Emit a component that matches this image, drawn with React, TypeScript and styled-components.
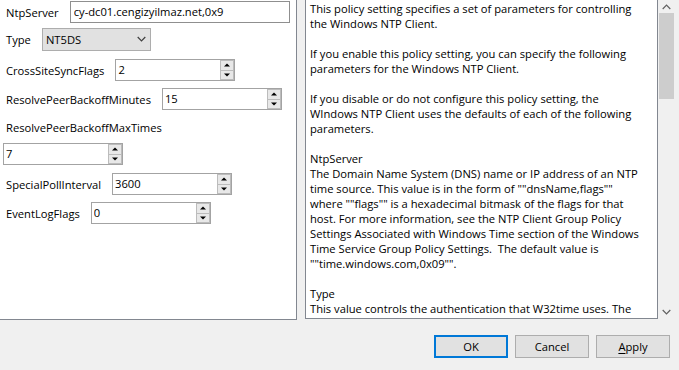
import React from "react";
import styled, { createGlobalStyle } from "styled-components";

const GlobalStyle = createGlobalStyle`
  html, body { margin: 0; padding: 0; }
  body {
    background: #f0f0f0;
    font-family: "Open Sans", "Noto Sans", sans-serif;
    font-size: 11.2px;
    color: #000;
  }
  #root { width: 679px; height: 370px; overflow: hidden; }
`;

const Dialog = styled.div`
  display: flex;
  flex-direction: column;
  width: 679px;
  height: 370px;
`;

const Panels = styled.div`
  display: flex;
  height: 320px;
`;

const OptionsPanel = styled.div`
  box-sizing: border-box;
  width: 297px;
  height: 320px;
  background: #fff;
  border-right: 1px solid #828790;
  border-bottom: 1px solid #828790;
  padding-left: 3px;
  display: flex;
  flex-direction: column;
`;

const Row = styled.div<{ $mt: number }>`
  display: flex;
  align-items: center;
  margin-top: ${(p) => p.$mt}px;
  white-space: nowrap;
`;

const Label = styled.span`
  margin-left: 3px;
  margin-right: 11px;
  line-height: 15px;
`;

const TextInput = styled.input<{ $w: number }>`
  box-sizing: border-box;
  width: ${(p) => p.$w}px;
  height: 22px;
  border: 1px solid #8f8f8f;
  padding: 0 0 1px 3px;
  margin: 0;
  font: inherit;
  color: #000;
  background: #fff;
  outline: none;
`;

const Combo = styled.div`
  box-sizing: border-box;
  width: 109px;
  height: 23px;
  border: 1px solid #adadad;
  background: #e1e1e1;
  display: flex;
  align-items: center;
  justify-content: space-between;
  padding: 0 4px 1px 3px;
`;

const SpinBox = styled.div<{ $w: number }>`
  box-sizing: border-box;
  width: ${(p) => p.$w}px;
  height: 22px;
  border: 1px solid #a3a3a3;
  background: #fff;
  display: flex;
`;

const SpinField = styled.input`
  flex: 1;
  min-width: 0;
  border: none;
  margin: 0;
  padding: 0 0 1px 2px;
  font: inherit;
  color: #000;
  background: transparent;
  outline: none;
`;

const SpinButtons = styled.div`
  display: flex;
  flex-direction: column;
  width: 14px;
  margin: 0 0 0 0;
`;

const SpinButton = styled.div`
  box-sizing: border-box;
  flex: 1;
  border: 1px solid #bcbcbc;
  background: #e8e8e8;
  display: flex;
  align-items: center;
  justify-content: center;
  & + & { border-top: none; }
`;

const HelpBox = styled.div`
  box-sizing: border-box;
  width: 353px;
  height: 319px;
  margin-left: 8px;
  background: #fff;
  border-left: 1px solid #828790;
  border-right: 1px solid #828790;
  border-bottom: 1px solid #828790;
  padding: 1px 0 0 4px;
  line-height: 15px;
  white-space: pre;
  overflow: hidden;
`;

const ScrollBar = styled.div`
  width: 17px;
  height: 320px;
  display: flex;
  flex-direction: column;
  align-items: center;
`;

const ScrollArrow = styled.div<{ $h: number }>`
  height: ${(p) => p.$h}px;
  width: 17px;
  display: flex;
  align-items: center;
  justify-content: center;
`;

const ScrollTrack = styled.div`
  flex: 1;
  width: 15px;
  display: flex;
  flex-direction: column;
`;

const Thumb = styled.div`
  height: 86px;
  background: #cdcdcd;
`;

const ButtonBar = styled.div`
  display: flex;
  justify-content: flex-end;
  gap: 7px;
  margin-top: 15px;
  padding-right: 9px;
`;

const Button = styled.div<{ $default?: boolean }>`
  box-sizing: border-box;
  width: 74px;
  height: 23px;
  background: #e1e1e1;
  border: ${(p) => (p.$default ? "2px solid #0078d7" : "1px solid #adadad")};
  display: flex;
  align-items: center;
  justify-content: center;
  padding-bottom: 1px;
  u { text-decoration-thickness: 1px; text-underline-offset: 2px; }
`;

const Tri = ({ up }: { up?: boolean }) => (
  <svg width="6" height="4" viewBox="0 0 6 4">
    <path d={up ? "M0 3.5 L3 0.5 L6 3.5 Z" : "M0 0.5 L3 3.5 L6 0.5 Z"} fill="#000" />
  </svg>
);

const Chevron = ({ up, color = "#404040" }: { up?: boolean; color?: string }) => (
  <svg width="9" height="6" viewBox="0 0 9 6">
    <path
      d={up ? "M0.7 5 L4.5 1.2 L8.3 5" : "M0.7 1 L4.5 4.8 L8.3 1"}
      fill="none"
      stroke={color}
      strokeWidth="1.2"
    />
  </svg>
);

const Spin = ({ w, value }: { w: number; value: string }) => (
  <SpinBox $w={w}>
    <SpinField readOnly value={value} />
    <SpinButtons>
      <SpinButton>
        <Tri up />
      </SpinButton>
      <SpinButton>
        <Tri />
      </SpinButton>
    </SpinButtons>
  </SpinBox>
);

const helpText = [
  "This policy setting specifies a set of parameters for controlling",
  "the Windows NTP Client.",
  "",
  "If you enable this policy setting, you can specify the following",
  "parameters for the Windows NTP Client.",
  "",
  "If you disable or do not configure this policy setting, the",
  "WIndows NTP Client uses the defaults of each of the following",
  "parameters.",
  "",
  "NtpServer",
  "The Domain Name System (DNS) name or IP address of an NTP",
  'time source. This value is in the form of ""dnsName,flags""',
  'where ""flags"" is a hexadecimal bitmask of the flags for that',
  "host. For more information, see the NTP Client Group Policy",
  "Settings Associated with Windows Time section of the Windows",
  "Time Service Group Policy Settings.  The default value is",
  '""time.windows.com,0x09"".',
  "",
  "Type",
  "This value controls the authentication that W32time uses. The",
  "default value is NT5DS.",
].join("\n");

export default function App() {
  return (
    <>
      <GlobalStyle />
      <Dialog>
        <Panels>
          <OptionsPanel>
            <Row $mt={1}>
              <Label>NtpServer</Label>
              <TextInput $w={220} readOnly value="cy-dc01.cengizyilmaz.net,0x9" />
            </Row>
            <Row $mt={5}>
              <Label>Type</Label>
              <Combo>
                <span>NT5DS</span>
                <Chevron />
              </Combo>
            </Row>
            <Row $mt={8}>
              <Label>CrossSiteSyncFlags</Label>
              <Spin w={120} value="2" />
            </Row>
            <Row $mt={7}>
              <Label>ResolvePeerBackoffMinutes</Label>
              <Spin w={120} value="15" />
            </Row>
            <Row $mt={10}>
              <Label>ResolvePeerBackoffMaxTimes</Label>
            </Row>
            <Row $mt={8}>
              <Spin w={120} value="7" />
            </Row>
            <Row $mt={8}>
              <Label>SpecialPollInterval</Label>
              <Spin w={120} value="3600" />
            </Row>
            <Row $mt={7}>
              <Label>EventLogFlags</Label>
              <Spin w={120} value="0" />
            </Row>
          </OptionsPanel>
          <HelpBox>{helpText}</HelpBox>
          <ScrollBar>
            <ScrollArrow $h={13}>
              <Chevron up color="#606060" />
            </ScrollArrow>
            <ScrollTrack>
              <Thumb />
            </ScrollTrack>
            <ScrollArrow $h={16}>
              <Chevron color="#606060" />
            </ScrollArrow>
          </ScrollBar>
        </Panels>
        <ButtonBar>
          <Button $default>OK</Button>
          <Button>Cancel</Button>
          <Button>
            <span>
              <u>A</u>pply
            </span>
          </Button>
        </ButtonBar>
      </Dialog>
    </>
  );
}
